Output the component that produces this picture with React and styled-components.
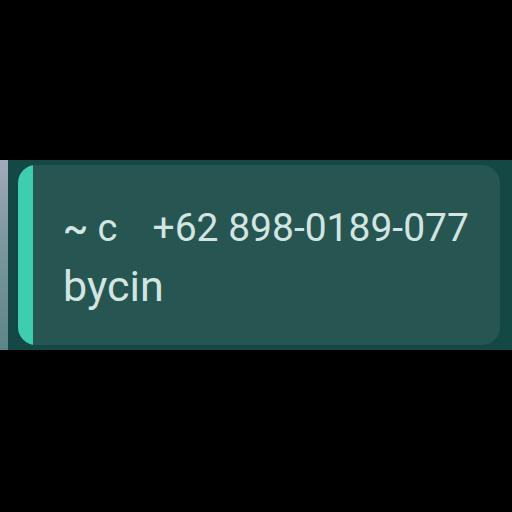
import React from "react";
import styled, { createGlobalStyle } from "styled-components";

const GlobalStyle = createGlobalStyle`
  html, body {
    margin: 0;
    padding: 0;
    background: #000;
  }
  body {
    font-family: Roboto, "Noto Sans", sans-serif;
  }
`;

const Screen = styled.div`
  width: 512px;
  height: 512px;
  background: #000;
  display: flex;
  flex-direction: column;
`;

const Band = styled.div`
  margin-top: 160px;
  height: 190px;
  display: flex;
  background: #144845;
`;

const Edge = styled.div`
  width: 8px;
  background: linear-gradient(#a3a9bb, #7f98a0 40%, #5d8587);
`;

const Inner = styled.div`
  flex: 1;
  display: flex;
  padding: 5px 12px 5px 10px;
`;

const Quote = styled.div`
  flex: 1;
  display: flex;
  background: #265552;
  border-radius: 18px;
  overflow: hidden;
`;

const Accent = styled.div`
  width: 15px;
  background: #3fcdb0;
  flex-shrink: 0;
`;

const Body = styled.div`
  padding: 34px 0 0 30px;
  color: #d2e5e1;
`;

const Header = styled.div`
  display: flex;
  gap: 35px;
  white-space: nowrap;
  font-size: 39px;
  line-height: 58px;
`;

const Sender = styled.span`
  font-size: 38px;
`;

const Tilde = styled.span`
  font-weight: 500;
`;

const Message = styled.div`
  font-size: 43px;
  line-height: 58px;
`;

export default function App() {
  return (
    <Screen>
      <GlobalStyle />
      <Band>
        <Edge />
        <Inner>
          <Quote>
            <Accent />
            <Body>
              <Header>
                <Sender><Tilde>~</Tilde> c</Sender>
                <span>+62 898-0189-077</span>
              </Header>
              <Message>bycin</Message>
            </Body>
          </Quote>
        </Inner>
      </Band>
    </Screen>
  );
}
